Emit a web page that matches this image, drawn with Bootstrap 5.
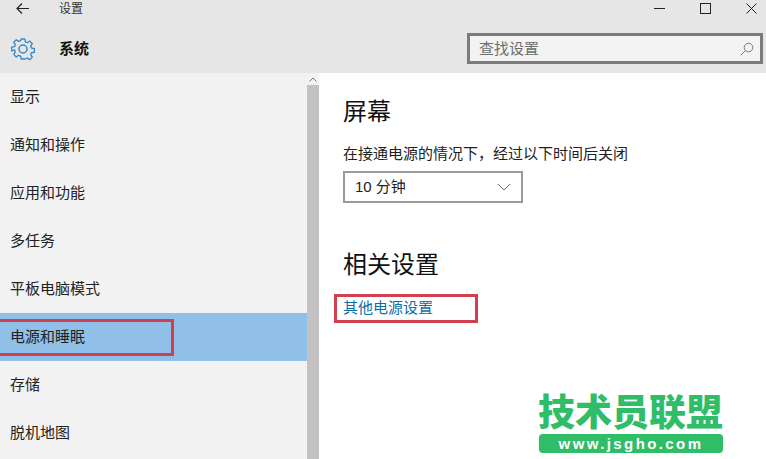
<!DOCTYPE html>
<html lang="zh">
<head>
<meta charset="utf-8">
<link href="https://cdn.jsdelivr.net/npm/bootstrap@5.3.0/dist/css/bootstrap.min.css" rel="stylesheet">
<style>
html,body{height:100%;}
body{width:766px;height:459px;overflow:hidden;background:#fff;color:#1a1a1a;font-family:"Liberation Sans","Noto Sans CJK SC",sans-serif;font-size:15px;position:relative;}
.top-area{height:73px;background:#e6e6e6;}
.title-row{height:17px;padding-left:16px;}
.title-txt{font-size:12px;line-height:17px;margin:1px 0 0 30px;color:#333;}
.win-btns{margin-left:auto;gap:35px;padding-right:9px;}
.head-row{padding:16px 3px 0 11px;}
.head-txt{font-size:15px;font-weight:700;margin:2px 0 0 24px;color:#111;}
.search-box{width:296px;height:31px;border:3px solid #7b7b7b;background:#f3f3f3;margin-left:auto;padding:1px 6px 0 9px;color:#6e6e6e;}
.main-area{height:386px;}
.side-list{width:307px;background:#f2f2f2;}
.side-item{height:48px;padding:1px 0 0 10px;display:flex;align-items:center;color:#222;}
.side-item.is-on{background:#90bfe7;}
.scroll-col{width:12px;background:#c2c2c2;}
.scroll-cap{height:12px;background:#f2f2f2;display:flex;align-items:center;justify-content:center;}
.content-pane{padding:24px 0 0 24px;}
.sec-title{font-size:24px;line-height:30px;font-weight:400;color:#111;margin:0;}
.sec-text{line-height:20px;margin:17px 0 7px;color:#222;}
.fake-select{width:180px;height:32px;border:2px solid #9a9a9a;padding:0 10px;font-size:15px;color:#222;}
.sec-two{margin-top:47px;}
.power-link{display:block;margin-top:18px;line-height:20px;color:#0b6fa8;text-decoration:none;}
.red-box{position:absolute;border:3px solid #d1404e;}
.red-a{left:-3px;top:319px;width:177px;height:37px;}
.red-b{left:334px;top:294px;width:144px;height:29px;}
.stamp{position:absolute;left:538px;top:387px;width:185px;color:#2fbd68;}
.stamp-name{font-family:"Noto Sans CJK SC",sans-serif;font-weight:900;font-size:37px;line-height:46px;white-space:nowrap;}
.stamp-url{height:19px;margin:1px 0 0 1px;background:#2fbd68;color:#fff;border-radius:4px;font-weight:700;font-size:15px;line-height:19px;letter-spacing:2.4px;text-align:center;}
</style>
</head>
<body>
<div class="top-area">
  <div class="title-row d-flex align-items-center">
    <svg width="13" height="11" viewBox="0 0 13 11"><path d="M6 .5 1 5.5l5 5M1 5.5h12" fill="none" stroke="#222" stroke-width="1.2"/></svg>
    <span class="title-txt">设置</span>
    <div class="win-btns d-flex align-items-center">
      <svg width="11" height="11" viewBox="0 0 11 11"><path d="M0 5.5h11" stroke="#222" stroke-width="1"/></svg>
      <svg width="11" height="11" viewBox="0 0 11 11"><rect x=".5" y=".5" width="10" height="10" fill="none" stroke="#222"/></svg>
      <svg width="11" height="11" viewBox="0 0 11 11"><path d="M.5.5l10 10M10.500.5l-10 10" stroke="#222"/></svg>
    </div>
  </div>
  <div class="head-row d-flex align-items-center">
    <svg width="24" height="24" viewBox="0 0 24 24"><path d="M10 1h4l.6 3.200 2.100.9 2.700-1.800 2.800 2.800-1.800 2.700.9 2.100 3.200.6v4l-3.200.6-.9 2.100 1.800 2.700-2.800 2.800-2.700-1.800-2.100.9L14 23h-4l-.6-3.200-2.100-.9-2.700 1.800-2.800-2.800 1.800-2.700-.9-2.100L-.5 14v-4l3.200-.6.9-2.100-1.800-2.700 2.800-2.800 2.700 1.800 2.100-.9z" transform="translate(1.100 1.100) scale(.91)" fill="none" stroke="#3a8ac9" stroke-width="1.500" stroke-linejoin="round"/><circle cx="12" cy="12" r="4" fill="none" stroke="#3a8ac9" stroke-width="1.500"/></svg>
    <span class="head-txt">系统</span>
    <div class="search-box d-flex align-items-center justify-content-between">
      <span>查找设置</span>
      <svg width="14" height="14" viewBox="0 0 14 14"><circle cx="8.500" cy="5.500" r="4.300" fill="none" stroke="#777"/><path d="M5.500 8.500.8 13.200" stroke="#777"/></svg>
    </div>
  </div>
</div>
<div class="main-area d-flex">
  <nav class="side-list">
    <div class="side-item">显示</div>
    <div class="side-item">通知和操作</div>
    <div class="side-item">应用和功能</div>
    <div class="side-item">多任务</div>
    <div class="side-item">平板电脑模式</div>
    <div class="side-item is-on">电源和睡眠</div>
    <div class="side-item">存储</div>
    <div class="side-item">脱机地图</div>
  </nav>
  <div class="scroll-col">
    <div class="scroll-cap"><svg width="8" height="5" viewBox="0 0 8 5"><path d="M.5 4.500 4 1l3.500 3.500" fill="none" stroke="#777"/></svg></div>
  </div>
  <main class="content-pane flex-grow-1">
    <h2 class="sec-title">屏幕</h2>
    <p class="sec-text">在接通电源的情况下，经过以下时间后关闭</p>
    <div class="fake-select d-flex align-items-center justify-content-between">
      <span>10 分钟</span>
      <svg width="14" height="8" viewBox="0 0 14 8"><path d="M1 1l6 6 6-6" fill="none" stroke="#666"/></svg>
    </div>
    <h2 class="sec-title sec-two">相关设置</h2>
    <a class="power-link" href="#">其他电源设置</a>
  </main>
</div>
<div class="red-box red-a"></div>
<div class="red-box red-b"></div>
<div class="stamp">
  <div class="stamp-name">技术员联盟</div>
  <div class="stamp-url">www.jsgho.com</div>
</div>
<script src="https://cdn.jsdelivr.net/npm/bootstrap@5.3.0/dist/js/bootstrap.bundle.min.js"></script>
</body>
</html>
